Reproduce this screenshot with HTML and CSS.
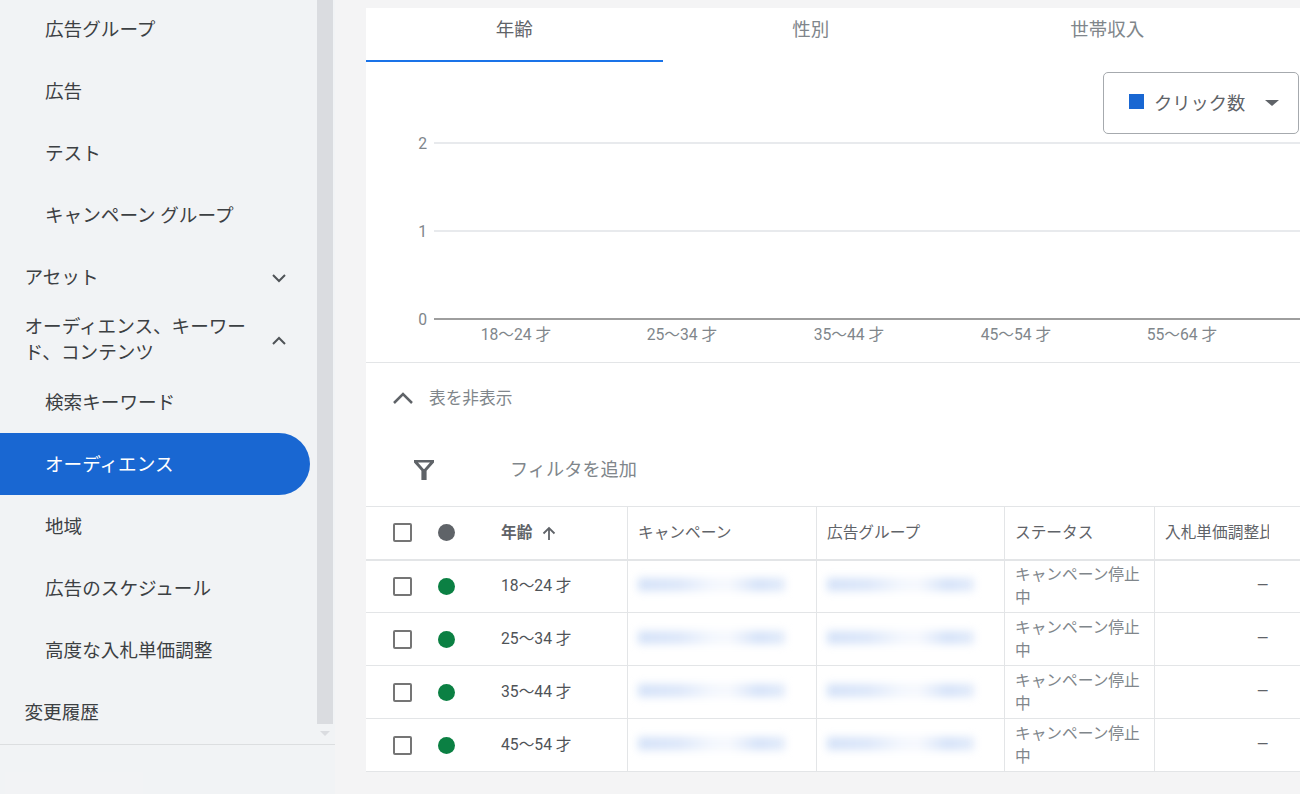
FILE: index.html
```html
<!DOCTYPE html>
<html lang="ja">
<head>
  <meta charset="UTF-8" />
  <title>オーディエンス</title>
  <link rel="stylesheet" href="styles.css">
</head>
<body>
  <aside class="sidebar">
    <div class="side-scroll">
      <nav class="nav">
        <a class="nav-item sub">広告グループ</a>
        <a class="nav-item sub">広告</a>
        <a class="nav-item sub">テスト</a>
        <a class="nav-item sub">キャンペーン グループ</a>
        <a class="nav-item group">
          <span>アセット</span>
          <svg class="chev" viewBox="0 0 16 10"><path d="M2 2l6 6 6-6"/></svg>
        </a>
        <a class="nav-item group">
          <span class="group-label">オーディエンス、キーワード、コンテンツ</span>
          <svg class="chev" viewBox="0 0 16 10"><path d="M2 8l6-6 6 6"/></svg>
        </a>
        <a class="nav-item sub">検索キーワード</a>
        <a class="nav-item sub active">オーディエンス</a>
        <a class="nav-item sub">地域</a>
        <a class="nav-item sub">広告のスケジュール</a>
        <a class="nav-item sub">高度な入札単価調整</a>
        <a class="nav-item group">変更履歴</a>
      </nav>
      <div class="scrollbar">
        <div class="thumb"></div>
        <div class="arrow"></div>
      </div>
    </div>
    <div class="side-foot"></div>
  </aside>

  <main class="main">
    <div class="tabs">
      <div class="tab active">年齢</div>
      <div class="tab">性別</div>
      <div class="tab">世帯収入</div>
    </div>

    <div class="chart">
      <svg class="plot" viewBox="0 0 934 300" width="934" height="300">
        <g class="grid">
          <line x1="68" y1="81" x2="934" y2="81"/>
          <line x1="68" y1="169" x2="934" y2="169"/>
        </g>
        <line class="axis" x1="68" y1="257" x2="934" y2="257"/>
        <g class="y-labels">
          <text x="61" y="86.500">2</text>
          <text x="61" y="174.500">1</text>
          <text x="61" y="262.500">0</text>
        </g>
        <g class="x-labels">
          <text x="150" y="278">18～24 才</text>
          <text x="316" y="278">25～34 才</text>
          <text x="483" y="278">35～44 才</text>
          <text x="650" y="278">45～54 才</text>
          <text x="816" y="278">55～64 才</text>
        </g>
      </svg>
      <div class="metric">
        <span class="swatch"></span>
        <span class="metric-name">クリック数</span>
        <span class="caret"></span>
      </div>
    </div>

    <div class="toggle">
      <svg class="toggle-icon" viewBox="0 0 22 14"><path d="M2 12l9-9 9 9"/></svg>
      <span class="toggle-text">表を非表示</span>
    </div>

    <div class="filter">
      <svg class="filter-icon" viewBox="0 0 22 22"><path d="M1 1h20v2.400l-7.400 8.400V21H8.400V11.800L1 3.400zM5 3.500l5.700 6.500h.6L17 3.500z" fill-rule="evenodd"/></svg>
      <span class="filter-text">フィルタを追加</span>
    </div>

    <table class="data">
      <colgroup>
        <col class="c-age"><col class="c-camp"><col class="c-group"><col class="c-status"><col class="c-bid">
      </colgroup>
      <thead>
        <tr>
          <th>
            <div class="lead">
              <span class="check"></span>
              <span class="dot grey"></span>
              <span class="age-head">年齢</span>
              <svg class="sort" viewBox="0 0 14 14"><path d="M7 14V2M1.500 7.500L7 2l5.500 5.500"/></svg>
            </div>
          </th>
          <th>キャンペーン</th>
          <th>広告グループ</th>
          <th>ステータス</th>
          <th><div class="clip">入札単価調整比</div></th>
        </tr>
      </thead>
      <tbody>
        <tr>
          <td><div class="lead"><span class="check"></span><span class="dot"></span><span class="age">18～24 才</span></div></td>
          <td><div class="redacted"></div></td>
          <td><div class="redacted"></div></td>
          <td class="status">キャンペーン停止中</td>
          <td class="num">—</td>
        </tr>
        <tr>
          <td><div class="lead"><span class="check"></span><span class="dot"></span><span class="age">25～34 才</span></div></td>
          <td><div class="redacted"></div></td>
          <td><div class="redacted"></div></td>
          <td class="status">キャンペーン停止中</td>
          <td class="num">—</td>
        </tr>
        <tr>
          <td><div class="lead"><span class="check"></span><span class="dot"></span><span class="age">35～44 才</span></div></td>
          <td><div class="redacted"></div></td>
          <td><div class="redacted"></div></td>
          <td class="status">キャンペーン停止中</td>
          <td class="num">—</td>
        </tr>
        <tr>
          <td><div class="lead"><span class="check"></span><span class="dot"></span><span class="age">45～54 才</span></div></td>
          <td><div class="redacted"></div></td>
          <td><div class="redacted"></div></td>
          <td class="status">キャンペーン停止中</td>
          <td class="num">—</td>
        </tr>
      </tbody>
    </table>
  </main>
</body>
</html>
```

FILE: styles.css
```css
:root {
  --page: #f1f3f5;
  --line: #e3e5e7;
  --blue: #1967d2;
  --text: #3c4043;
  --muted: #80868b;
}
* {
  box-sizing: border-box;
}
body {
  margin: 0;
  height: 794px;
  overflow: hidden;
  display: flex;
  background-color: #f4f4f5;
  color: var(--text);
  font-family: Roboto, "Noto Sans CJK JP", sans-serif;
}

/* sidebar */
.sidebar {
  width: 335px;
  flex-shrink: 0;
  background-color: var(--page);
}
.side-scroll {
  display: flex;
  height: 745px;
  border-bottom: 1px solid #dcdee0;
  overflow: hidden;
}
.nav {
  width: 317px;
  margin-top: -2px;
  padding-right: 7px;
}
.nav-item {
  display: flex;
  align-items: center;
  justify-content: space-between;
  height: 62.1px;
  padding-top: 2px;
  font-size: 18.6px;
  line-height: 26px;
  color: var(--text);
}
.nav-item.sub {
  padding-left: 45px;
}
.nav-item.group {
  padding-left: 24.5px;
  padding-right: 23px;
}
.nav-item.active {
  background-color: var(--blue);
  color: white;
  border-radius: 0 31px 31px 0;
}
.group-label {
  width: 226px;
  margin-top: -2px;
}
.chev {
  width: 16px;
  height: 10px;
  fill: none;
  stroke: #4f5357;
  stroke-width: 2;
}
.scrollbar {
  width: 16px;
  flex-shrink: 0;
}
.thumb {
  height: 724px;
  background-color: #dadce0;
}
.arrow {
  width: 0;
  margin: 7px 0 0 3px;
  border-left: 5px solid transparent;
  border-right: 5px solid transparent;
  border-top: 5px solid #dadce0;
}
.side-foot {
  height: 22px;
  margin: 27px 0 0 5px;
  width: 138px;
  background-color: #f2f3f5;
}

/* main panel */
.main {
  width: 934px;
  margin-left: 31px;
  margin-top: 8px;
  height: 763px;
  background-color: white;
}
.tabs {
  display: flex;
  height: 54px;
}
.tab {
  width: 296.5px;
  padding-top: 9px;
  text-align: center;
  font-size: 18.5px;
  line-height: 26px;
  color: var(--muted);
}
.tab.active {
  color: #5f6368;
  border-bottom: 2px solid #1a73e8;
}
.chart {
  position: relative;
  height: 301px;
  border-bottom: 1px solid var(--line);
}
.plot {
  display: block;
}
.grid line {
  stroke: #e8eaed;
  stroke-width: 2;
}
.axis {
  stroke: #9e9e9e;
  stroke-width: 2;
}
.plot text {
  font-family: Roboto, "Noto Sans CJK JP", sans-serif;
  font-size: 15.7px;
  fill: var(--muted);
}
.y-labels text {
  text-anchor: end;
}
.x-labels text {
  text-anchor: middle;
}
.metric {
  position: absolute;
  top: 10px;
  right: 1px;
  width: 196px;
  height: 62px;
  display: flex;
  align-items: center;
  padding-left: 25px;
  padding-bottom: 3px;
  background-color: white;
  border: 1px solid #a6aaae;
  border-radius: 5px;
  font-size: 18.3px;
  color: #5f6368;
}
.swatch {
  width: 15px;
  height: 15px;
  background-color: var(--blue);
  margin-right: 10px;
}
.caret {
  margin-left: 20px;
  margin-top: 3px;
  border-left: 7px solid transparent;
  border-right: 7px solid transparent;
  border-top: 6px solid #5f6368;
}
.toggle {
  display: flex;
  align-items: center;
  height: 70px;
  padding-left: 26px;
  font-size: 16.7px;
  color: var(--muted);
}
.toggle-text {
  margin-bottom: 3px;
}
.toggle-icon {
  width: 22px;
  height: 14px;
  margin-right: 15px;
  fill: none;
  stroke: #5f6368;
  stroke-width: 2.5;
}
.filter {
  display: flex;
  align-items: center;
  height: 73px;
  padding-left: 47px;
  font-size: 18.2px;
  color: var(--muted);
}
.filter-text {
  margin-bottom: 3px;
}
.filter-icon {
  width: 22px;
  height: 22px;
  margin-right: 75px;
  fill: #5f6368;
}

/* table */
.data {
  width: 934px;
  table-layout: fixed;
  border-collapse: collapse;
  font-size: 15.7px;
  border-top: 1px solid var(--line);
}
.c-age { width: 261px; }
.c-camp { width: 189px; }
.c-group { width: 188px; }
.c-status { width: 150px; }
.c-bid { width: 146px; }
.data th,
.data td {
  height: 53px;
  padding: 0 0 0 10.5px;
  border: 1px solid var(--line);
  border-left: none;
  text-align: left;
  font-weight: normal;
}
.data th {
  padding-bottom: 2px;
  border-bottom-width: 2px;
  color: #5f6368;
}
.data th:first-child,
.data td:first-child {
  padding-left: 27px;
}
.data th:first-child {
  padding-bottom: 0;
}
.lead {
  display: flex;
  align-items: center;
}
.check {
  width: 19px;
  height: 19px;
  border: 2px solid #757575;
  border-radius: 2px;
  margin-right: 26px;
}
.dot {
  width: 17px;
  height: 17px;
  border-radius: 50%;
  background-color: #0b8043;
  margin-right: 46px;
}
.dot.grey {
  background-color: #5f6368;
}
.age-head {
  font-weight: bold;
  margin-bottom: 2px;
}
.age {
  margin-bottom: 3px;
  color: #4f5357;
}
.sort {
  width: 14px;
  height: 14px;
  margin-left: 10px;
  fill: none;
  stroke: #5f6368;
  stroke-width: 1.8;
}
.clip {
  width: 104px;
  white-space: nowrap;
  overflow: hidden;
}
.redacted {
  width: 147px;
  height: 13px;
  margin-bottom: 4px;
  background: linear-gradient(90deg, #d3e1f8 0, #dbe6f9 28%, #f2f6fd 50%, #f6f8fd 62%, #d3e1f8 82%, #e2ebfa 100%);
  filter: blur(4px);
}
.status {
  line-height: 23px;
  color: var(--muted);
}
.num {
  text-align: right !important;
  padding-right: 31px !important;
  padding-bottom: 3px !important;
  font-size: 15px;
  color: #5f6368;
}
```
